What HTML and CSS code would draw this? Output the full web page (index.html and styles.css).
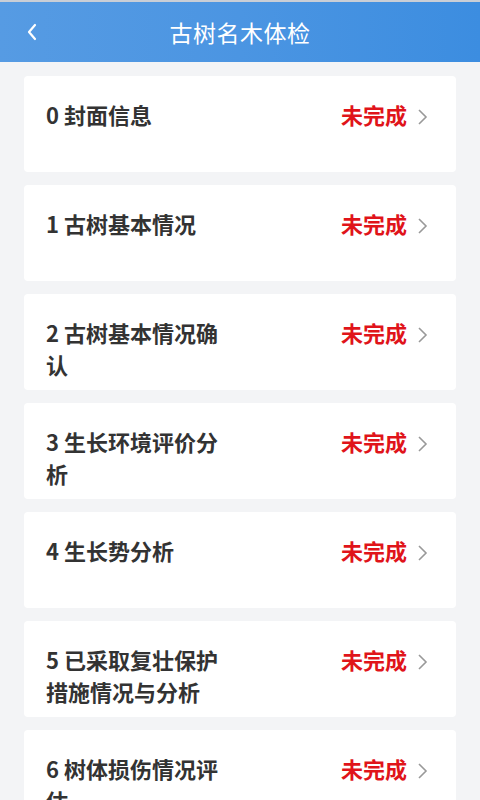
FILE: index.html
```html
<!DOCTYPE html>
<html lang="zh">
<head>
<meta charset="utf-8">
<link rel="stylesheet" href="styles.css">
</head>
<body>
<div class="topline"></div>
<header class="bar">
  <svg class="back" width="14" height="20" viewBox="0 0 14 20"><path d="M10 3 L4 10 L10 17" fill="none" stroke="#fff" stroke-width="2.2" stroke-linecap="round" stroke-linejoin="round"/></svg>
  <h1 class="bar-title">古树名木体检</h1>
</header>
<main class="list">
  <div class="card"><div class="name">0 封面信息</div><div class="state">未完成</div><svg class="chev" width="12" height="18" viewBox="0 0 12 18"><path d="M3 2 L10 9 L3 16" fill="none" stroke="#999" stroke-width="1.6"/></svg></div>
  <div class="card"><div class="name">1 古树基本情况</div><div class="state">未完成</div><svg class="chev" width="12" height="18" viewBox="0 0 12 18"><path d="M3 2 L10 9 L3 16" fill="none" stroke="#999" stroke-width="1.6"/></svg></div>
  <div class="card"><div class="name">2 古树基本情况确认</div><div class="state">未完成</div><svg class="chev" width="12" height="18" viewBox="0 0 12 18"><path d="M3 2 L10 9 L3 16" fill="none" stroke="#999" stroke-width="1.6"/></svg></div>
  <div class="card"><div class="name">3 生长环境评价分析</div><div class="state">未完成</div><svg class="chev" width="12" height="18" viewBox="0 0 12 18"><path d="M3 2 L10 9 L3 16" fill="none" stroke="#999" stroke-width="1.6"/></svg></div>
  <div class="card"><div class="name">4 生长势分析</div><div class="state">未完成</div><svg class="chev" width="12" height="18" viewBox="0 0 12 18"><path d="M3 2 L10 9 L3 16" fill="none" stroke="#999" stroke-width="1.6"/></svg></div>
  <div class="card"><div class="name">5 已采取复壮保护措施情况与分析</div><div class="state">未完成</div><svg class="chev" width="12" height="18" viewBox="0 0 12 18"><path d="M3 2 L10 9 L3 16" fill="none" stroke="#999" stroke-width="1.6"/></svg></div>
  <div class="card"><div class="name">6 树体损伤情况评估</div><div class="state">未完成</div><svg class="chev" width="12" height="18" viewBox="0 0 12 18"><path d="M3 2 L10 9 L3 16" fill="none" stroke="#999" stroke-width="1.6"/></svg></div>
</main>
</body>
</html>
```
FILE: styles.css
```css
* { box-sizing: border-box; }
html, body { margin: 0; padding: 0; }
body {
  width: 480px;
  height: 800px;
  overflow: hidden;
  background: #f3f4f6;
  font-family: "Noto Sans CJK SC", "Noto Sans", sans-serif;
}
.topline { height: 2px; background: #c9ced6; }
.bar {
  height: 60px;
  background: linear-gradient(90deg, #569be3 0%, #4b95e2 50%, #3c8de0 100%);
  display: flex;
  align-items: center;
  justify-content: center;
  position: relative;
}
.back { position: absolute; left: 25px; top: 20px; }
.bar-title {
  margin: 0;
  color: #fff;
  font-size: 23px;
  font-weight: 400;
  letter-spacing: 0.5px;
}
.list {
  padding: 14px 24px 0;
  display: flex;
  flex-direction: column;
  gap: 13px;
}
.card {
  flex: none;
  height: 96px;
  background: #fff;
  border-radius: 4px;
  display: flex;
  align-items: flex-start;
  padding: 22px 28px 0 22px;
  overflow: hidden;
}
.name {
  width: 182px;
  font-size: 22px;
  line-height: 32px;
  font-weight: 700;
  color: #333;
}
.state {
  margin-left: auto;
  font-size: 22px;
  line-height: 32px;
  font-weight: 700;
  color: #e0141a;
}
.chev { margin: 10px 0 0 9px; flex: none; }
```
